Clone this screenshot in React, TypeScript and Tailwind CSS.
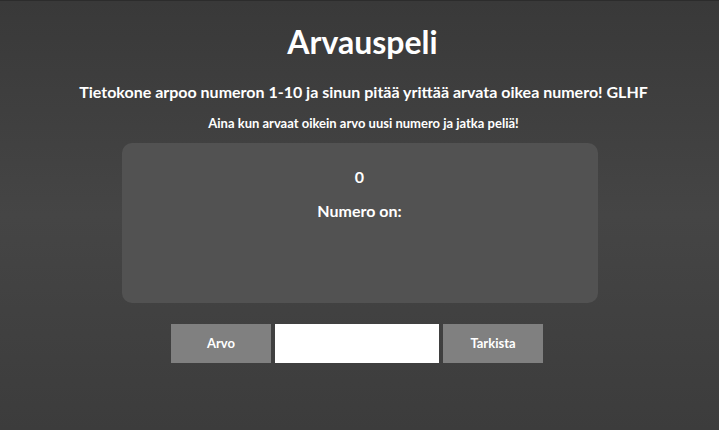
import { useState } from "react";

const App = () => {
	const [luku, setLuku] = useState(0);
	const [arvaus, setArvaus] = useState("");

	return (
		<div className="min-h-[430px] w-full border-t border-[#2c2c2c] bg-gradient-to-b from-[#393939] via-[#454545] to-[#3c3c3c] text-white font-['Lato',sans-serif] flex flex-col items-center">
			<h1 className="mt-[21px] pl-[6px] text-[32px] leading-[40px] font-bold">Arvauspeli</h1>
			<p className="mt-[20px] pl-[8px] text-[16px] leading-[20px] font-bold">
				Tietokone arpoo numeron 1-10 ja sinun pitää yrittää arvata oikea numero! GLHF
			</p>
			<p className="mt-[13px] pl-[8px] text-[13px] leading-[16px] font-bold">
				Aina kun arvaat oikein arvo uusi numero ja jatka peliä!
			</p>

			{/* Pelialue */}
			<div className="mt-[12px] w-[476px] h-[160px] rounded-[10px] bg-[#525252] flex flex-col items-center">
				<p className="mt-[24px] text-[16px] leading-[20px] font-bold">{luku}</p>
				<p className="mt-[14px] text-[16px] leading-[20px] font-bold">Numero on:</p>
			</div>

			<div className="mt-[21px] pr-[5px] flex items-center gap-[4px]">
				<button
					className="w-[100px] h-[39px] bg-[#808080] text-[13px] font-bold"
					onClick={() => setLuku(Math.floor(Math.random() * 10) + 1)}
				>
					Arvo
				</button>
				<input
					className="w-[164px] h-[39px] bg-white text-black px-2 outline-none"
					value={arvaus}
					onChange={(e) => setArvaus(e.target.value)}
				/>
				<button className="w-[100px] h-[39px] bg-[#808080] text-[13px] font-bold">
					Tarkista
				</button>
			</div>
		</div>
	);
};

export default App;
